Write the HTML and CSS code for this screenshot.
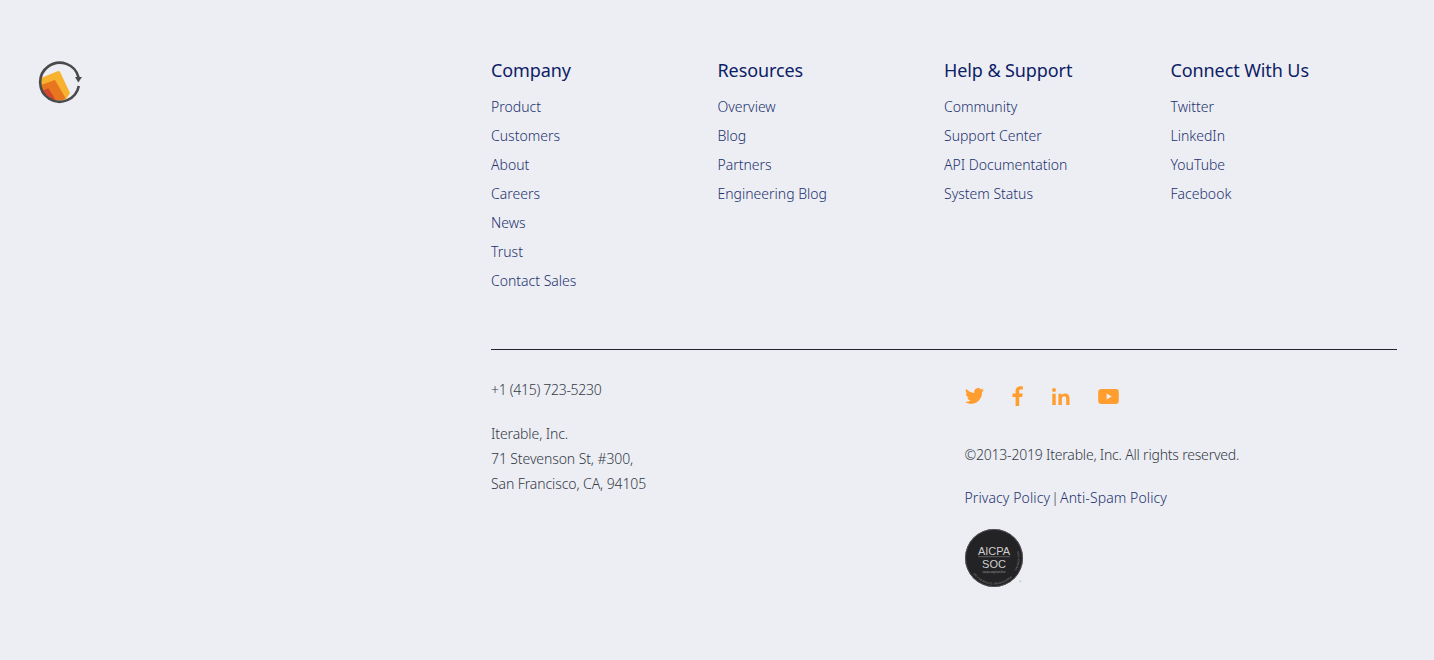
FILE: index.html
```html
<!DOCTYPE html>
<html lang="en">
<head>
  <meta charset="UTF-8">
  <meta name="viewport" content="width=device-width, initial-scale=1.0">
  <title>Iterable Footer</title>
  <link rel="stylesheet" href="styles.css">
</head>
<body>
  <footer class="footer">
    <div class="footer-logo">
      <svg width="44" height="44" viewBox="0 0 44 44">
        <clipPath id="logo-clip"><circle cx="21.500" cy="21.500" r="19"/></clipPath>
        <g clip-path="url(#logo-clip)">
          <path d="M3 18 L19.500 11.200 Q21.300 10.600 22.100 12 L32 33 L25 44 L0 44 L0 20Z" fill="#f7b230"/>
          <path d="M3 25 L17 20 L27.500 38 L22 44 L0 44Z" fill="#e8761f"/>
          <path d="M2 32 L10.300 28.300 L19 42 L12 44Z" fill="#d2452f"/>
        </g>
        <path d="M40.800 26 A19.500 19.500 0 1 1 40.600 17.500" fill="none" stroke="#4a4a4a" stroke-width="2.600"/>
        <path d="M37 17 L44 17 L40.300 22.500Z" fill="#4a4a4a"/>
      </svg>
    </div>
    <div class="footer-main">
      <div class="footer-cols">
        <div class="footer-col">
          <h4>Company</h4>
          <ul>
            <li><a href="#">Product</a></li>
            <li><a href="#">Customers</a></li>
            <li><a href="#">About</a></li>
            <li><a href="#">Careers</a></li>
            <li><a href="#">News</a></li>
            <li><a href="#">Trust</a></li>
            <li><a href="#">Contact Sales</a></li>
          </ul>
        </div>
        <div class="footer-col">
          <h4>Resources</h4>
          <ul>
            <li><a href="#">Overview</a></li>
            <li><a href="#">Blog</a></li>
            <li><a href="#">Partners</a></li>
            <li><a href="#">Engineering Blog</a></li>
          </ul>
        </div>
        <div class="footer-col">
          <h4>Help &amp; Support</h4>
          <ul>
            <li><a href="#">Community</a></li>
            <li><a href="#">Support Center</a></li>
            <li><a href="#">API Documentation</a></li>
            <li><a href="#">System Status</a></li>
          </ul>
        </div>
        <div class="footer-col">
          <h4>Connect With Us</h4>
          <ul>
            <li><a href="#">Twitter</a></li>
            <li><a href="#">LinkedIn</a></li>
            <li><a href="#">YouTube</a></li>
            <li><a href="#">Facebook</a></li>
          </ul>
        </div>
      </div>
      <div class="footer-bottom">
        <div class="footer-address">
          <p class="phone">+1 (415) 723-5230</p>
          <p>Iterable, Inc.<br>71 Stevenson St, #300,<br>San Francisco, CA, 94105</p>
        </div>
        <div class="footer-legal">
          <div class="social">
            <a href="#"><svg width="19" height="16" viewBox="0 0 24 20"><path fill="#ff9d2e" d="M24 2.400a9.800 9.800 0 0 1-2.800.8A4.900 4.900 0 0 0 23.300.500a9.800 9.800 0 0 1-3.100 1.200 4.900 4.900 0 0 0-8.400 4.500A13.900 13.900 0 0 1 1.700.900a4.900 4.900 0 0 0 1.500 6.500 4.900 4.900 0 0 1-2.200-.6c0 2.400 1.700 4.400 3.900 4.900a4.900 4.900 0 0 1-2.200.1 4.900 4.900 0 0 0 4.600 3.400A9.900 9.900 0 0 1 0 17.700 13.900 13.900 0 0 0 7.500 20c9.100 0 14.300-7.700 14-14.600A10 10 0 0 0 24 2.400z"/></svg></a>
            <a href="#"><svg width="11" height="20" viewBox="0 0 11 20"><path fill="#ff9d2e" d="M7.200 20V11h3l.5-3.500H7.200V5.300c0-1 .3-1.700 1.700-1.700h2V.400C10.500.300 9.400.200 8.200.200 5.500.200 3.600 1.800 3.600 4.900v2.600H.500V11h3.100v9z"/></svg></a>
            <a href="#"><svg width="18" height="17" viewBox="0 0 19 18"><path fill="#ff9d2e" d="M.300 6h3.600v12H.300zM2.100 0a2.100 2.100 0 1 1 0 4.200 2.100 2.100 0 0 1 0-4.200zM6.800 6h3.400v1.600c.5-1 1.800-1.900 3.600-1.900 3.800 0 4.700 2.400 4.700 5.700V18H15v-5.900c0-1.500-.1-3.300-2-3.300-2 0-2.600 1.500-2.600 3.200v6H6.800z"/></svg></a>
            <a href="#"><svg width="21" height="15" viewBox="0 0 22 16"><path fill="#ff9d2e" fill-rule="evenodd" d="M3.500 0h15A3.500 3.500 0 0 1 22 3.500v9a3.500 3.500 0 0 1-3.500 3.500h-15A3.500 3.500 0 0 1 0 12.500v-9A3.500 3.500 0 0 1 3.500 0zM9 4.800v6.400L14.500 8z"/></svg></a>
          </div>
          <p class="copyright">©2013-2019 Iterable, Inc. All rights reserved.</p>
          <p class="policies"><a href="#">Privacy Policy</a> | <a href="#">Anti-Spam Policy</a></p>
          <svg class="soc-badge" width="60" height="60" viewBox="0 0 60 60">
            <circle cx="29" cy="29" r="29" fill="#232224"/>
            <circle cx="29" cy="29" r="28.500" fill="none" stroke="#5d5c60" stroke-width=".8"/>
            <path id="soc-ring-bottom" d="M8 44.500 A25.500 25.500 0 0 0 50 44.500" fill="none"/>
            <path id="soc-ring-right" d="M51 42 A25.500 25.500 0 0 0 52 18" fill="none"/>
            <text class="soc-ring-text"><textPath href="#soc-ring-bottom">SOC FOR SERVICE ORGANIZATIONS</textPath></text>
            <text class="soc-ring-text"><textPath href="#soc-ring-right">ORGANIZATIONS</textPath></text>
            <text class="soc-big" x="29" y="25.500" text-anchor="middle">AICPA</text>
            <path d="M13 27.700 H45" stroke="#8a8a8a" stroke-width=".6"/>
            <text class="soc-big" x="29" y="39" text-anchor="middle">SOC</text>
            <text class="soc-small" x="29" y="43.500" text-anchor="middle">aicpa.org/soc4so</text>
            <text class="soc-small" x="54" y="54">®</text>
          </svg>
        </div>
      </div>
    </div>
  </footer>
</body>
</html>
```

FILE: styles.css
```css
body {
  margin: 0;
  background-color: #eceef3;
  font-family: "Noto Sans", Arial, sans-serif;
  font-weight: 300;
  color: #353a46;
}
a {
  color: #24316f;
  text-decoration: none;
}
.footer {
  display: flex;
  height: 660px;
  box-sizing: border-box;
  padding: 58px 37px 0 38px;
}
.footer-logo {
  width: 453px;
  flex: none;
  padding-top: 2px;
}
.footer-logo svg {
  display: block;
}
.footer-main {
  flex: 1;
}
.footer-cols {
  display: grid;
  grid-template-columns: repeat(4, 1fr);
  height: 291px;
  border-bottom: 1px solid #1f2430;
}
.footer-col h4 {
  margin: 0 0 10px;
  font-size: 18px;
  font-weight: 400;
  line-height: 24px;
  letter-spacing: -0.1px;
  color: #0c2066;
}
.footer-col ul {
  list-style: none;
  margin: 0;
  padding: 0;
}
.footer-col li {
  font-size: 14px;
  line-height: 29px;
}
.footer-bottom {
  display: flex;
  padding-top: 27px;
  font-size: 14px;
}
.footer-address {
  width: 473.500px;
  flex: none;
  line-height: 25px;
  letter-spacing: -0.1px;
}
.footer-address p {
  margin: 0;
}
.footer-address .phone {
  margin-bottom: 19px;
  letter-spacing: -0.3px;
}
.social {
  display: flex;
  align-items: center;
  gap: 28.500px;
  height: 38px;
}
.social a {
  display: flex;
}
.copyright {
  margin: 27px 0 0;
  line-height: 25px;
  letter-spacing: -0.2px;
}
.policies {
  margin: 18px 0 0;
  line-height: 25px;
  word-spacing: -2.500px;
}
.policies a {
  letter-spacing: 0.1px;
  word-spacing: 0;
}
.soc-badge {
  display: block;
  margin-top: 19px;
}
.soc-big {
  font-family: "Liberation Sans", Arial, sans-serif;
  font-size: 11px;
  fill: #cfcfcf;
}
.soc-small {
  font-family: "Liberation Sans", Arial, sans-serif;
  font-size: 3px;
  fill: #9a9a9a;
}
.soc-ring-text {
  font-family: "Liberation Sans", Arial, sans-serif;
  font-size: 2.500px;
  fill: #8f8f8f;
}
```
